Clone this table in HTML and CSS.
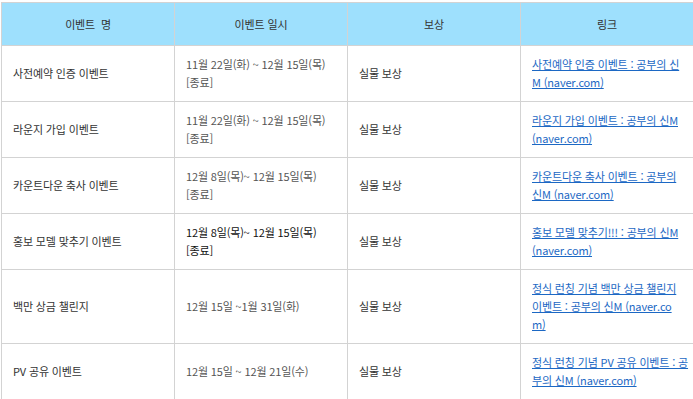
FILE: index.html
```html
<!DOCTYPE html>
<html lang="ko">
<head>
<meta charset="utf-8">
<link rel="stylesheet" href="styles.css">
</head>
<body>
<table class="events">
  <colgroup><col class="c"><col class="c"><col class="c"><col class="c"></colgroup>
  <thead>
    <tr><th>이벤트&nbsp; 명</th><th>이벤트 일시</th><th>보상</th><th>링크</th></tr>
  </thead>
  <tbody>
    <tr>
      <td>사전예약 인증 이벤트</td>
      <td class="date">11월 22일(화) ~ 12월 15일(목)<span class="status">[종료]</span></td>
      <td>실물 보상</td>
      <td class="link"><a href="#">사전예약 인증 이벤트 : 공부의 신<br>M (naver.com)</a></td>
    </tr>
    <tr>
      <td>라운지 가입 이벤트</td>
      <td class="date">11월 22일(화) ~ 12월 15일(목)<span class="status">[종료]</span></td>
      <td>실물 보상</td>
      <td class="link"><a href="#">라운지 가입 이벤트 : 공부의 신M<br>(naver.com)</a></td>
    </tr>
    <tr>
      <td>카운트다운 축사 이벤트</td>
      <td class="date">12월 8일(목)~ 12월 15일(목)<span class="status">[종료]</span></td>
      <td>실물 보상</td>
      <td class="link"><a href="#">카운트다운 축사 이벤트 : 공부의<br>신M (naver.com)</a></td>
    </tr>
    <tr>
      <td>홍보 모델 맞추기 이벤트</td>
      <td class="date dark">12월 8일(목)~ 12월 15일(목)<span class="status">[종료]</span></td>
      <td>실물 보상</td>
      <td class="link"><a href="#">홍보 모델 맞추기!!! : 공부의 신M<br>(naver.com)</a></td>
    </tr>
    <tr>
      <td>백만 상금 챌린지</td>
      <td class="date">12월 15일 ~1월 31일(화)</td>
      <td>실물 보상</td>
      <td class="link"><a href="#">정식 런칭 기념 백만 상금 챌린지<br>이벤트 : 공부의 신M (naver.co<br>m)</a></td>
    </tr>
    <tr>
      <td>PV 공유 이벤트</td>
      <td class="date">12월 15일 ~ 12월 21일(수)</td>
      <td>실물 보상</td>
      <td class="link"><a href="#">정식 런칭 기념 PV 공유 이벤트 : 공<br>부의 신M (naver.com)</a></td>
    </tr>
  </tbody>
</table>
</body>
</html>
```
FILE: styles.css
```css
html, body {
  margin: 0;
  padding: 0;
  background: #fff;
}
body {
  padding: 2px 0 0 1px;
  font-family: "Noto Sans CJK KR", "Noto Sans", sans-serif;
  font-size: 11px;
  letter-spacing: -0.15px;
  line-height: 18px;
  color: #333;
}
.events {
  border-collapse: collapse;
  table-layout: fixed;
  width: 693px;
}
.events .c { width: 173px; }
.events th,
.events td {
  border: 1px solid #d3d3d3;
  padding: 9px 11px 10px;
  vertical-align: middle;
  text-align: left;
  white-space: nowrap;
}
.events th {
  background: #9ee0fd;
  font-weight: normal;
  text-align: center;
  padding: 12px 11px;
  color: #333;
}
.events td.date { color: #555; }
.events td.date.dark { color: #111; }
.status { display: block; }
.events a {
  color: #1c68c4;
  text-decoration: underline;
}
```
